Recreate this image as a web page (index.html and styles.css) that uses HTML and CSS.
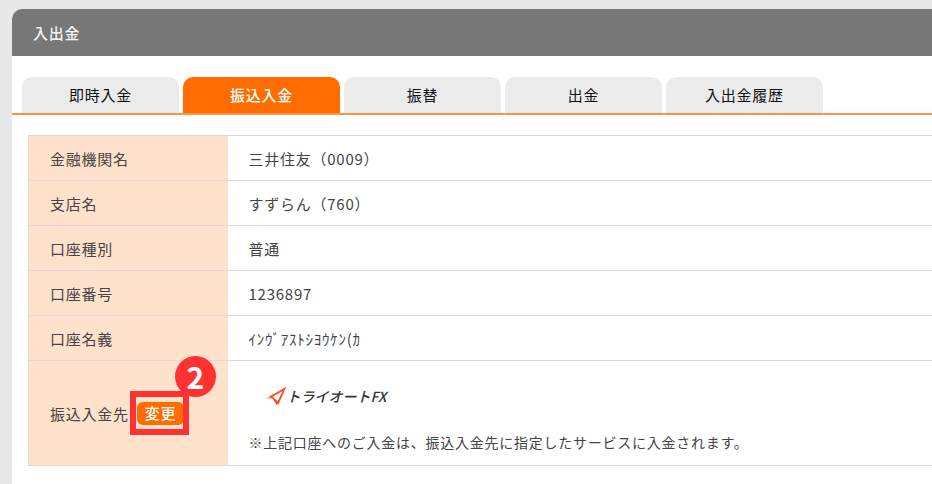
FILE: index.html
```html
<!DOCTYPE html>
<html lang="ja">
<head>
    <meta charset="UTF-8">
    <meta name="viewport" content="width=device-width, initial-scale=1.0">
    <title>入出金</title>
    <link rel="stylesheet" href="styles.css">
</head>
<body>
    <main class="panel">
        <h1 class="panel-title">入出金</h1>

        <nav class="tabs">
            <a class="tab" href="#instant">即時入金</a>
            <a class="tab active" href="#transfer">振込入金</a>
            <a class="tab" href="#move">振替</a>
            <a class="tab" href="#withdraw">出金</a>
            <a class="tab" href="#history">入出金履歴</a>
        </nav>

        <div class="content">
            <table class="account">
                <tr>
                    <th scope="row">金融機関名</th>
                    <td>三井住友（0009）</td>
                </tr>
                <tr>
                    <th scope="row">支店名</th>
                    <td>すずらん（760）</td>
                </tr>
                <tr>
                    <th scope="row">口座種別</th>
                    <td>普通</td>
                </tr>
                <tr>
                    <th scope="row">口座番号</th>
                    <td>1236897</td>
                </tr>
                <tr>
                    <th scope="row">口座名義</th>
                    <td>ｲﾝｳﾞｱｽﾄｼﾖｳｹﾝ(ｶ</td>
                </tr>
                <tr class="destination">
                    <th scope="row">
                        <div class="change">
                            <span>振込入金先</span>
                            <div class="callout">
                                <button class="change-btn" type="button">変更</button>
                                <span class="callout-frame"></span>
                                <span class="callout-number">2</span>
                            </div>
                        </div>
                    </th>
                    <td>
                        <div class="service">
                            <svg class="service-mark" width="22" height="20" viewBox="0 0 66 60" aria-hidden="true">
                                <path d="M1 40 L24 23 L24 38 L10 38 Z" fill="#ff5a2a" opacity="0.4"/>
                                <path fill="#ff4a1c" fill-rule="evenodd" d="M64 2 L11 33 L22 37 L35 57 L41 54 Z M53 15 L38 46 L23 32 Z"/>
                            </svg>
                            <span class="service-name">トライオートFX</span>
                        </div>
                        <p class="note">※上記口座へのご入金は、振込入金先に指定したサービスに入金されます。</p>
                    </td>
                </tr>
            </table>
        </div>
    </main>
</body>
</html>
```

FILE: styles.css
```css
* {
    box-sizing: border-box;
}

body {
    margin: 0;
    padding: 9px 0 0 12px;
    min-height: 100vh;
    display: flex;
    background-color: #e8e8e8;
    color: #444;
    font-family: "Noto Sans CJK JP", sans-serif;
    font-size: 15px;
    line-height: 20px;
    letter-spacing: 0.05em;
}

.panel {
    flex: 1;
    background-color: #fff;
    border-top-left-radius: 10px;
    overflow: hidden;
}

.panel-title {
    margin: 0;
    padding: 14px 21px 13px;
    background-color: #777;
    color: #f4f4f4;
    font-size: 15px;
    font-weight: 500;
}

.tabs {
    display: flex;
    gap: 4px;
    margin-top: 21px;
    padding-left: 10px;
    border-bottom: 2px solid #ff9340;
}

.tab {
    width: 157px;
    padding: 8px 0;
    background-color: #ebebeb;
    border-radius: 10px 10px 0 0;
    color: #111;
    text-align: center;
    text-decoration: none;
}

.tab.active {
    background-color: #ff6c00;
    color: #fff;
    font-weight: 500;
}

.content {
    padding: 20px 0 16px 16px;
}

.account {
    width: 100%;
    border-collapse: collapse;
    border-left: 1px solid #d9d9d9;
}

.account th,
.account td {
    height: 45px;
    padding: 1px 21px 0;
    border-top: 1px solid #d9d9d9;
    border-bottom: 1px solid #d9d9d9;
    font-weight: 400;
    text-align: left;
}

.account th {
    width: 199px;
    background-color: #ffe1cc;
    background-clip: padding-box;
    white-space: nowrap;
}

.account .destination th,
.account .destination td {
    height: 105px;
    padding-right: 0;
}

.account .destination td {
    padding-top: 12px;
}

.change {
    display: flex;
    align-items: center;
    gap: 8px;
}

.callout {
    position: relative;
}

.change-btn {
    display: block;
    padding: 1px 8px 2px;
    border: none;
    border-radius: 6px;
    background-color: #ff6c00;
    color: #fff;
    font: inherit;
    font-weight: 500;
    letter-spacing: inherit;
    cursor: pointer;
}

/* red frame and step number over the button */
.callout-frame {
    position: absolute;
    inset: -11px -5px -10px -7px;
    border: 6px solid #ff3131;
    pointer-events: none;
}

.callout-number {
    position: absolute;
    top: -46px;
    left: 38px;
    width: 41px;
    height: 41px;
    border-radius: 50%;
    background-color: #ff3131;
    color: #fff;
    font-size: 30px;
    font-weight: 700;
    line-height: 40px;
    letter-spacing: normal;
    text-align: center;
}

.service {
    display: flex;
    align-items: center;
    padding-left: 16px;
}

.service-name {
    color: #333;
    font-size: 14px;
    font-style: italic;
    font-weight: 500;
    letter-spacing: normal;
}

.note {
    margin: 26px 0 0;
    font-size: 14px;
}
```
